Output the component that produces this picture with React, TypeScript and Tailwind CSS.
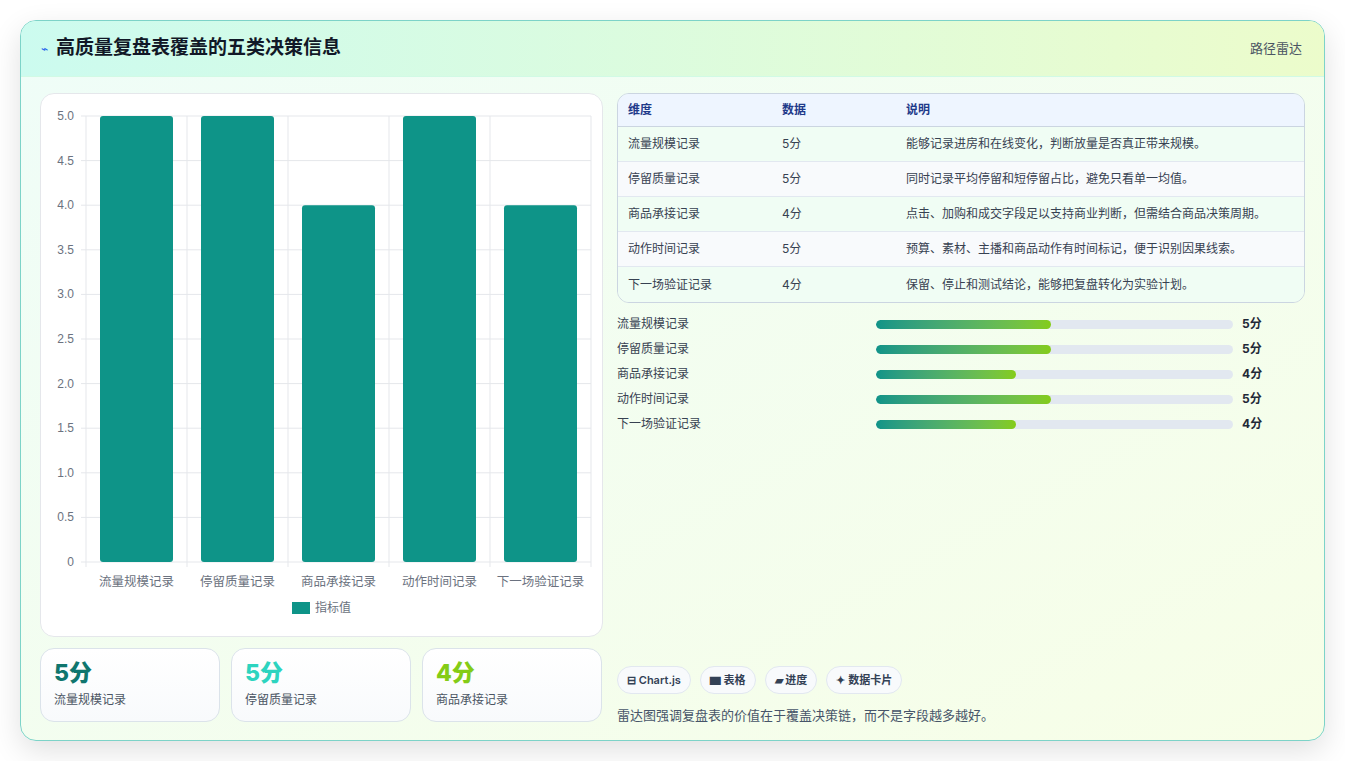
import React from "react";

const rows = [
  ["流量规模记录", 5, "能够记录进房和在线变化，判断放量是否真正带来规模。"],
  ["停留质量记录", 5, "同时记录平均停留和短停留占比，避免只看单一均值。"],
  ["商品承接记录", 4, "点击、加购和成交字段足以支持商业判断，但需结合商品决策周期。"],
  ["动作时间记录", 5, "预算、素材、主播和商品动作有时间标记，便于识别因果线索。"],
  ["下一场验证记录", 4, "保留、停止和测试结论，能够把复盘转化为实验计划。"],
] as const;

function Chart() {
  const W = 563, H = 543;
  const x0 = 45, x1 = 550, yTop = 22, yBot = 468;
  const ticks = [5, 4.5, 4, 3.5, 3, 2.5, 2, 1.5, 1, 0.5, 0];
  const cw = (x1 - x0) / 5;
  const y = (v: number) => yBot - (v / 5) * (yBot - yTop);
  return (
    <svg width={W} height={H} className="block">
      {ticks.map((t) => (
        <g key={t}>
          <line x1={x0 - 5} x2={x1} y1={y(t)} y2={y(t)} stroke="#e5e7eb" />
          <text x={x0 - 12} y={y(t) + 4} textAnchor="end" fontSize="12" fill="#6b7280" fontFamily="Liberation Sans, sans-serif">
            {t === 0 ? "0" : t.toFixed(1)}
          </text>
        </g>
      ))}
      {[0, 1, 2, 3, 4, 5].map((i) => (
        <line key={i} x1={x0 + i * cw} x2={x0 + i * cw} y1={yTop} y2={yBot + 5} stroke="#e5e7eb" />
      ))}
      {rows.map((r, i) => (
        <g key={i}>
          <rect x={x0 + i * cw + 14} y={y(r[1])} width={cw - 28} height={yBot - y(r[1])} rx="3" fill="#0e9488" />
          <text x={x0 + i * cw + cw / 2} y={yBot + 24} textAnchor="middle" fontSize="12.5" fill="#6b7280" fontFamily="Noto Sans CJK SC, sans-serif">
            {r[0]}
          </text>
        </g>
      ))}
      <rect x={251} y={508} width={18} height={12} fill="#0e9488" />
      <text x={274} y={518} fontSize="12" fill="#6b7280" fontFamily="Noto Sans CJK SC, sans-serif">指标值</text>
    </svg>
  );
}

export default function App() {
  return (
    <div className="w-[1345px] h-[761px] bg-white p-5 pt-5" style={{ fontFamily: "Inter, 'Noto Sans CJK SC', sans-serif" }}>
      <div className="w-[1305px] h-[721px] rounded-[16px] border border-[#7dd3c8] overflow-hidden shadow-[0_10px_30px_rgba(0,0,0,0.12)] bg-gradient-to-br from-[#effdf8] to-[#f7fee7] flex flex-col">
        <div className="h-[56px] flex items-center justify-between px-5 bg-gradient-to-r from-[#ccfbef] to-[#ecfccb] border-b border-[#d1fae5]">
          <div className="flex items-center gap-2">
            <span className="text-[#2563eb] text-[12px]">⌁</span>
            <span className="text-[19px] font-bold text-[#111827]">高质量复盘表覆盖的五类决策信息</span>
          </div>
          <span className="text-[13px] text-[#4b5563] mr-[2px]">路径雷达</span>
        </div>
        <div className="flex gap-[14px] px-[19px] pt-[16px]">
          <div className="w-[563px] flex flex-col gap-[11px]">
            <div className="h-[544px] bg-white rounded-[14px] border border-[#e5e7eb] overflow-hidden">
              <Chart />
            </div>
            <div className="flex gap-[11px]">
              {[["5分", "#0f766e", "流量规模记录"], ["5分", "#2dd4bf", "停留质量记录"], ["4分", "#84cc16", "商品承接记录"]].map(([v, c, l], i) => (
                <div key={i} className="w-[180px] h-[74px] rounded-[14px] border border-[#dbe3ea] bg-gradient-to-b from-white to-[#f8fafc] px-[13px] pt-[10px]">
                  <div className="text-[23px] font-extrabold leading-[28px]" style={{ color: c }}>{v}</div>
                  <div className="text-[12px] text-[#4b5563] mt-[4px]">{l}</div>
                </div>
              ))}
            </div>
          </div>
          <div className="w-[688px] flex flex-col">
            <div className="rounded-[12px] border border-[#cbd5e1] overflow-hidden text-[12px]">
              <div className="flex h-[33px] items-center bg-[#eef5ff] text-[#1e3a8a] font-semibold border-b border-[#cbd5e1]">
                <div className="w-[164px] pl-[10px]">维度</div>
                <div className="w-[124px]">数据</div>
                <div>说明</div>
              </div>
              {rows.map((r, i) => (
                <div key={i} className={`flex h-[35px] items-center text-[#374151] ${i % 2 === 0 ? "bg-[#f0fdf4]" : "bg-[#f8fafc]"} ${i < 4 ? "border-b border-[#e2e8f0]" : ""}`}>
                  <div className="w-[164px] pl-[10px]">{r[0]}</div>
                  <div className="w-[124px]">{r[1]}分</div>
                  <div>{r[2]}</div>
                </div>
              ))}
            </div>
            <div className="flex flex-col gap-[11px] mt-[14px]">
              {rows.map((r, i) => (
                <div key={i} className="flex items-center h-[14px] text-[12px]">
                  <div className="w-[259px] text-[#374151]">{r[0]}</div>
                  <div className="w-[357px] h-[9px] rounded-full bg-[#e2e8f0] overflow-hidden">
                    <div className="h-full rounded-full bg-gradient-to-r from-[#0f9488] to-[#84cc16]" style={{ width: `${r[1] === 5 ? 49 : 39.2}%` }} />
                  </div>
                  <div className="ml-[9px] font-bold text-[#1f2937]">{r[1]}分</div>
                </div>
              ))}
            </div>
            <div className="mt-[235px] flex gap-[9px] text-[11px] font-semibold text-[#334155]">
              {["⊟ Chart.js", "▆ 表格", "▰ 进度", "✦ 数据卡片"].map((t) => (
                <span key={t} className="h-[28px] px-[9px] flex items-center rounded-full border border-[#e2e8f0] bg-[#f8fafc]">{t}</span>
              ))}
            </div>
            <div className="mt-[12px] text-[13px] text-[#475569]">雷达图强调复盘表的价值在于覆盖决策链，而不是字段越多越好。</div>
          </div>
        </div>
      </div>
    </div>
  );
}
